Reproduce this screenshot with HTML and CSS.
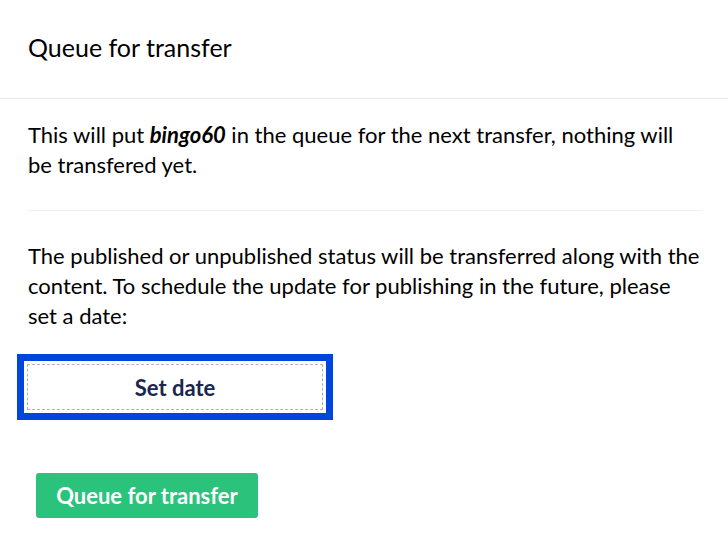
FILE: index.html
```html
<!DOCTYPE html>
<html>
<head>
<meta charset="utf-8">
<link rel="stylesheet" href="styles.css">
</head>
<body>
<div class="dialog">
  <div class="header">
    <h1 class="title">Queue for transfer</h1>
  </div>
  <div class="content">
    <p class="text first">This will put <strong><em>bingo60</em></strong> in the queue for the next transfer, nothing will be transfered yet.</p>
    <hr class="sep">
    <p class="text">The published or unpublished status will be transferred along with the content. To schedule the update for publishing in the future, please set a date:</p>
    <div class="focus-ring">
      <button class="btn-date">Set date</button>
    </div>
    <button class="btn-queue">Queue for transfer</button>
  </div>
</div>
</body>
</html>
```

FILE: styles.css
```css
* { box-sizing: border-box; }
html, body {
  margin: 0;
  padding: 0;
  background: #fff;
}
body {
  font-family: Lato, "Open Sans", sans-serif;
  color: #000;
}
.dialog {
  width: 728px;
  height: 560px;
}
.header {
  height: 99px;
  border-bottom: 1px solid #e9e9eb;
  display: flex;
  align-items: center;
  padding: 0 28px 4px;
}
.title {
  margin: 0;
  font-size: 25px;
  font-weight: 400;
  line-height: 30px;
}
.content {
  padding: 21px 26px 0 28px;
}
.text {
  margin: 0;
  font-size: 22px;
  line-height: 30px;
}
.sep {
  border: 0;
  border-top: 1px solid #f0f0f2;
  margin: 30px 0 30px;
  height: 0;
}
.focus-ring {
  margin: 23px 0 0 -11px;
  width: 316px;
  height: 66px;
  border: 7px solid #0045de;
  padding: 3px;
}
.btn-date {
  display: block;
  width: 100%;
  height: 100%;
  border: 1px dashed #b4b4b8;
  background: #fff;
  font-family: Lato, sans-serif;
  font-size: 22px;
  font-weight: 700;
  color: #1b264f;
  padding: 0;
}
.btn-queue {
  display: block;
  margin: 53px 0 0 8px;
  width: 222px;
  height: 45px;
  border: 0;
  border-radius: 3px;
  background: #2bc37c;
  color: #fff;
  font-family: Lato, sans-serif;
  font-size: 22px;
  font-weight: 700;
  padding: 0;
}
```
